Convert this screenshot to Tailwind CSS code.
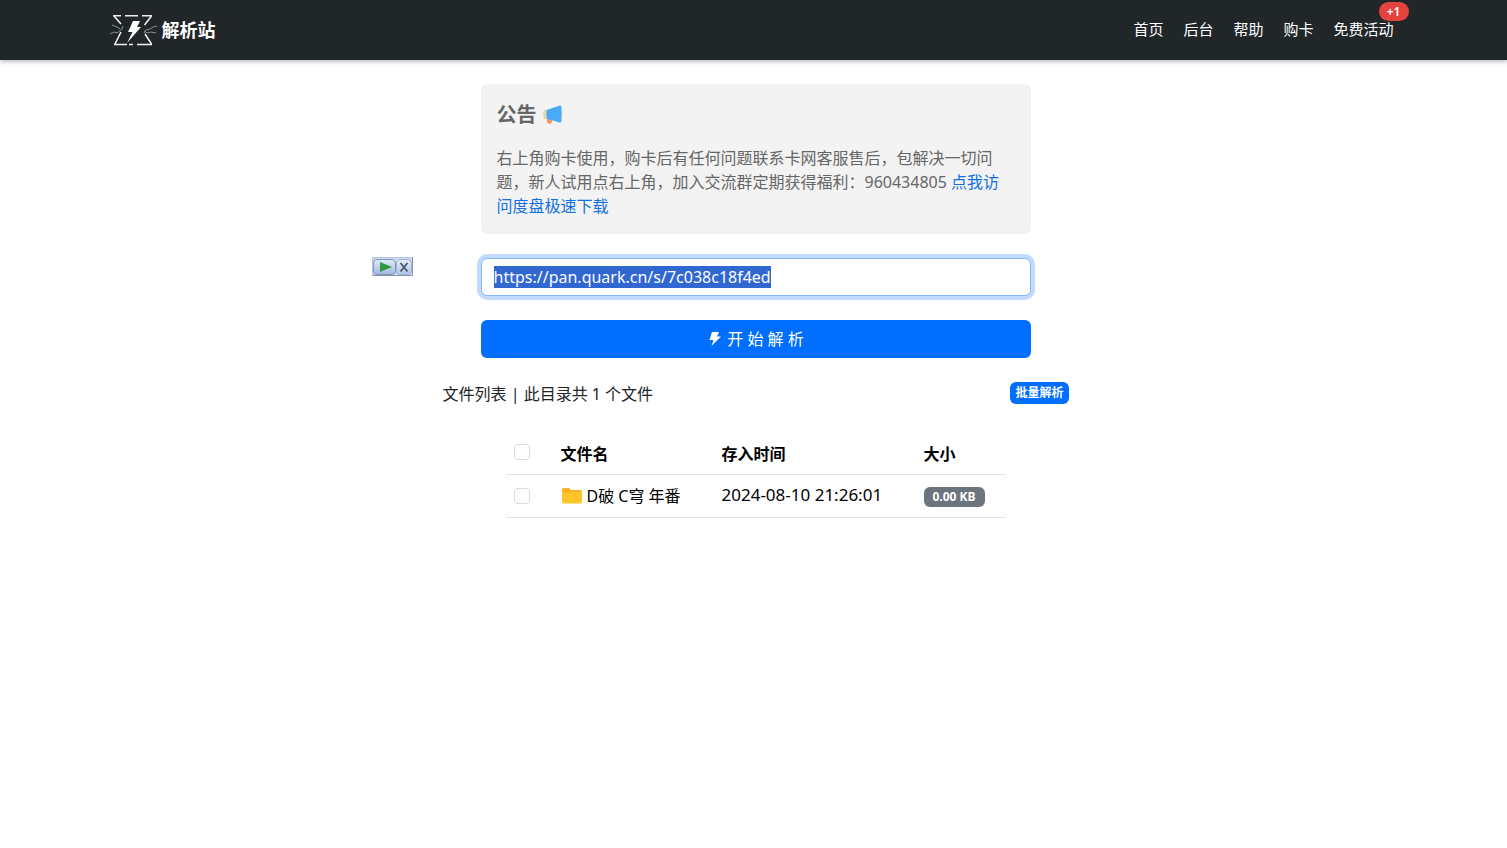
<!DOCTYPE html>
<html lang="zh-CN">
<head>
<meta charset="utf-8">
<meta name="viewport" content="width=device-width, initial-scale=1">
<title>解析站</title>
<script src="https://cdn.jsdelivr.net/npm/@tailwindcss/browser@4"></script>
</head>
<body class="relative min-h-screen bg-white font-['Noto_Sans','Noto_Sans_CJK_SC',sans-serif] text-base leading-6 text-[#212529]">
<header class="bg-[#212629] shadow-[0_2px_4px_rgba(0,0,0,0.25)]">
  <div class="mx-auto flex h-15 max-w-[1288px] items-center justify-between">
    <a href="#" class="flex items-center gap-1 text-lg font-bold text-white">
      <svg class="h-9 w-12" viewBox="0 0 48 36" fill="none" aria-hidden="true">
        <g stroke="#eceeef" stroke-width="1.6">
          <path d="M3 3.800h8M15 3.800h13M32 3.800h10M4 32.500h13M19 32.500h4M27 32.500h15"/>
          <path d="M4 4l7 8M41.500 4l-7 9M11 20L5 32M35 22l6.500 10"/>
        </g>
        <g stroke="#8b9094" stroke-width="1">
          <path d="M0 22l4-2 3 1 5-4 1-3M2 13l5 2 3 2M46 21l-5-1-4 1-3-2M47 14l-4 1-3 2-4 1-2 3"/>
        </g>
        <path d="M23 9h7l-3 6h4L17 31l5.500-11H18z" fill="#fff"/>
      </svg>
      <span>解析站</span>
    </a>
    <nav class="flex gap-5 pr-1 pb-0.5 text-[15px] text-white">
      <a href="#">首页</a>
      <a href="#">后台</a>
      <a href="#">帮助</a>
      <a href="#">购卡</a>
      <a href="#" class="relative">免费活动<span class="absolute -top-[15px] -right-[15px] flex h-[19px] w-[30px] items-center justify-center rounded-full bg-[#e54340] text-xs font-semibold">+1</span></a>
    </nav>
  </div>
</header>

<div class="absolute top-[257px] left-[372px] flex h-[19px] w-[41px] items-center border border-[#b9c6dd] border-r-[#8793ab] border-b-[#8793ab] bg-[#cfdcf0]">
  <button type="button" aria-label="播放" class="flex h-4 w-6 items-center justify-center rounded-sm border border-[#7f96c2] bg-linear-to-b from-[#dfe8f7] to-[#a4bbe2]">
    <svg class="h-3 w-4" viewBox="0 0 16 12" aria-hidden="true"><path d="M3 1l12 5-12 5z" fill="#2d9a42"/></svg>
  </button>
  <button type="button" aria-label="关闭" class="flex h-4 w-4 items-center justify-center rounded-sm border border-[#9fb2d5] bg-linear-to-b from-[#e4ecf9] to-[#b4c7e8]">
    <svg class="h-3 w-3" viewBox="0 0 12 12" aria-hidden="true"><path d="M2.500 2l7 8.500M9.500 2l-7 8.500" stroke="#4a5468" stroke-width="1.800"/></svg>
  </button>
</div>

<main class="mx-auto max-w-[630px] pt-6 pl-1">
  <div class="mx-auto flex max-w-[550px] flex-col gap-6">
    <section class="rounded-md bg-[#f3f3f3] p-4 text-[#666]">
      <h1 class="mb-4 flex items-center gap-1 text-xl leading-[30px] font-bold">公告
        <svg class="h-6 w-6" viewBox="0 0 24 24" aria-hidden="true">
          <path d="M6 14h5.500l-.5 5-2 2-3-1.500z" fill="#f4935a"/>
          <path d="M3 7h3v9H3c-1-3-1-6 0-9zM20 8c2 1.500 2 5 0 6.500z" fill="#ecd5a8"/>
          <path d="M5.500 7L19 2.500q1.500 0 1.500 1.500v14.500q-.5 1.500-2 1L5.500 15.500z" fill="#48aaf8"/>
        </svg>
      </h1>
      <p>右上角购卡使用，购卡后有任何问题联系卡网客服售后，包解决一切问题，新人试用点右上角，加入交流群定期获得福利：960434805 <a href="#" class="text-[#1170e4]">点我访问度盘极速下载</a></p>
    </section>
    <input id="link" type="text" aria-label="分享链接" value="https://pan.quark.cn/s/7c038c18f4ed" autofocus spellcheck="false" class="h-[38px] w-full rounded-md border border-[#86b7fe] bg-white px-3 text-base leading-6 outline-none ring-4 ring-[#c2dbfe] selection:bg-[#3067d1] selection:text-white">
    <button type="button" class="flex h-[38px] w-full items-center justify-center gap-1 rounded-md bg-[#006eff] text-white">
      <svg class="h-4 w-4" viewBox="0 0 16 16" fill="currentColor" aria-hidden="true"><path d="M5 1h7l-2 4.500h4L4.500 15l2-6H2.500z"/></svg>
      开 始 解 析
    </button>
  </div>

  <div class="mt-6 flex items-start justify-between">
    <h2>文件列表 | 此目录共 1 个文件</h2>
    <button type="button" class="flex h-[22px] items-center rounded-md bg-[#006eff] px-[5px] text-xs font-bold text-white">批量解析</button>
  </div>

  <table class="mx-auto mt-[25px] w-full max-w-[500px] table-fixed text-left text-black">
    <colgroup><col class="w-[47px]"><col class="w-[161px]"><col class="w-[202px]"><col></colgroup>
    <thead>
      <tr class="h-[43px] border-b border-[#dee2e6]">
        <th class="px-2"><input type="checkbox" aria-label="全选" class="block h-4 w-4 appearance-none rounded border border-[#d9dcdf] bg-white"></th>
        <th class="px-2 pt-1">文件名</th>
        <th class="px-2 pt-1">存入时间</th>
        <th class="px-2 pt-1">大小</th>
      </tr>
    </thead>
    <tbody>
      <tr class="h-[43px] border-b border-[#dee2e6]">
        <td class="px-2"><input type="checkbox" aria-label="选择 D破 C穹 年番" class="block h-4 w-4 appearance-none rounded border border-[#d9dcdf] bg-white"></td>
        <td class="px-2">
          <span class="flex items-center gap-1">
            <svg class="h-5 w-[22px]" viewBox="0 0 22 20" aria-hidden="true"><path d="M1 3.500Q1 2 2.500 2h5.500l2 2H19q2 0 2 1.500V8H1z" fill="#ffb02a"/><path d="M1 6h20v10q0 1.500-1.500 1.500h-17Q1 17.500 1 16z" fill="#ffc526"/></svg>
            <span>D破 C穹 年番</span>
          </span>
        </td>
        <td class="px-2 pb-0.5 text-[17px]">2024-08-10 21:26:01</td>
        <td class="px-2 pt-0.5"><span class="flex h-5 w-[61px] items-center justify-center rounded-md bg-[#6c757d] text-xs font-bold text-white">0.00 KB</span></td>
      </tr>
    </tbody>
  </table>
</main>
<script>
  const link = document.getElementById('link');
  link.focus();
  link.select();
</script>
</body>
</html>
